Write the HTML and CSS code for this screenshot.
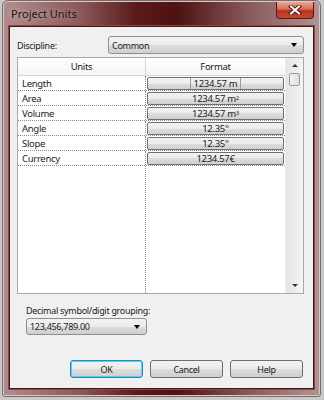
FILE: index.html
```html
<!DOCTYPE html>
<html lang="en">
<head>
<meta charset="UTF-8">
<meta name="viewport" content="width=device-width, initial-scale=1.0">
<title>Project Units</title>
<link rel="stylesheet" href="styles.css">
</head>
<body>
<div class="window">
  <div class="titlebar">
    <span class="title">Project Units</span>
    <div class="close">
      <svg width="14" height="10" viewBox="0 0 14 10">
        <path d="M3 1.5 L11 8.5 M11 1.5 L3 8.5" stroke="#4a1a14" stroke-width="4" stroke-linecap="square"/>
        <path d="M3 1.5 L11 8.5 M11 1.5 L3 8.5" stroke="#fff" stroke-width="2" stroke-linecap="square"/>
      </svg>
    </div>
  </div>
  <div class="client">
    <div class="discipline">
      <span class="label">Discipline:</span>
      <div class="combo wide">
        <span>Common</span>
        <span class="arrow"></span>
      </div>
    </div>

    <div class="grid">
      <div class="grid-main">
        <div class="head">
          <div class="col-units">Units</div>
          <div class="col-format">Format</div>
        </div>
        <div class="rows">
          <div class="row">
            <div class="col-units cell">Length</div>
            <div class="col-format cell"><div class="fmt"><span class="focus">1234.57 m</span></div></div>
          </div>
          <div class="row">
            <div class="col-units cell">Area</div>
            <div class="col-format cell"><div class="fmt">1234.57 m<sup>2</sup></div></div>
          </div>
          <div class="row">
            <div class="col-units cell">Volume</div>
            <div class="col-format cell"><div class="fmt">1234.57 m<sup>3</sup></div></div>
          </div>
          <div class="row">
            <div class="col-units cell">Angle</div>
            <div class="col-format cell"><div class="fmt">12.35&deg;</div></div>
          </div>
          <div class="row">
            <div class="col-units cell">Slope</div>
            <div class="col-format cell"><div class="fmt">12.35&deg;</div></div>
          </div>
          <div class="row">
            <div class="col-units cell">Currency</div>
            <div class="col-format cell"><div class="fmt">1234.57&euro;</div></div>
          </div>
          <div class="row filler">
            <div class="col-units"></div>
            <div class="col-format"></div>
          </div>
        </div>
      </div>
      <div class="scrollbar">
        <span class="up"></span>
        <span class="thumb"></span>
        <span class="gap"></span>
        <span class="down"></span>
      </div>
    </div>

    <div class="grouping-label">Decimal symbol/digit grouping:</div>
    <div class="combo narrow">
      <span>123,456,789.00</span>
      <span class="arrow"></span>
    </div>

    <div class="buttons">
      <button class="btn default">OK</button>
      <button class="btn">Cancel</button>
      <button class="btn">Help</button>
    </div>
  </div>
</div>
</body>
</html>
```

FILE: styles.css
```css
body {
  margin: 0;
  background: #c9c9c9;
  font-family: "Noto Sans", sans-serif;
  font-size: 9px;
  letter-spacing: -0.3px;
  color: #1b1b1b;
}
.window {
  margin: 0 0 0 2px;
  width: 319px;
  height: 397px;
  box-sizing: border-box;
  padding: 0 6px 7px 6px;
  border: 1px solid #7a6a6a;
  border-radius: 6px 6px 3px 3px;
  background: linear-gradient(to right, #b08e8e 0%, #8a5656 25%, #5a1a1a 42%, #4e1212 55%, #8a5a5a 78%, #b09494 100%);
  box-shadow: inset 0 0 0 1px #d8c8c8;
  display: flex;
  flex-direction: column;
}
.titlebar {
  height: 25px;
  display: flex;
  align-items: flex-start;
  justify-content: space-between;
  flex-shrink: 0;
}
.title {
  margin: 5px 0 0 2px;
  color: #1e1414;
  font-size: 11px;
  letter-spacing: 0;
  text-shadow: 0 0 6px rgba(255,255,255,0.6);
}
.close {
  width: 38px;
  height: 17px;
  margin: 1px 0 0 0;
  box-sizing: border-box;
  border: 1px solid #5a1810;
  border-top: none;
  border-radius: 0 0 4px 4px;
  background: linear-gradient(#e8a898 0%, #d86a52 45%, #b8301c 55%, #c84a30 100%);
  display: flex;
  align-items: center;
  justify-content: center;
}
.client {
  flex: 1;
  background: #f0f0f0;
  border: 1px solid #4a1414;
  box-shadow: 0 0 0 1px #8a4a4a;
  padding: 9px 9px 0 7px;
  display: flex;
  flex-direction: column;
}
.discipline {
  display: flex;
  align-items: center;
  height: 18px;
}
.label {
  width: 91px;
}
.combo {
  height: 18px;
  box-sizing: border-box;
  border: 1px solid #8e8f8f;
  border-radius: 3px;
  background: linear-gradient(#f2f2f2, #ebebeb 50%, #dddddd 50%, #cfcfcf);
  display: flex;
  align-items: center;
  justify-content: space-between;
  padding: 0 6px 0 3px;
}
.combo.wide {
  flex: 1;
}
.combo.narrow {
  width: 121px;
  height: 17px;
  margin: 1px 0 0 9px;
}
.arrow {
  width: 0;
  height: 0;
  border-left: 3.5px solid transparent;
  border-right: 3.5px solid transparent;
  border-top: 4px solid #000;
}
.grid {
  margin-top: 3px;
  height: 237px;
  box-sizing: border-box;
  border: 1px solid #a9a9a9;
  background: #fff;
  display: flex;
  font-size: 9.5px;
}
.grid-main {
  flex: 1;
  display: flex;
  flex-direction: column;
}
.head {
  display: flex;
  height: 18px;
  box-sizing: border-box;
  border-bottom: 1px solid #d5d5d5;
  background: linear-gradient(#ffffff, #f5f5f6);
}
.head > div {
  display: flex;
  align-items: center;
  justify-content: center;
}
.col-units {
  width: 128px;
  box-sizing: border-box;
  border-right: 1px solid #d5d5d5;
}
.col-format {
  flex: 1;
}
.rows {
  flex: 1;
  display: flex;
  flex-direction: column;
}
.row {
  display: flex;
  height: 15px;
  box-sizing: border-box;
  border-bottom: 1px dotted #8c8c8c;
}
.row .col-units {
  border-right: 1px dotted #8c8c8c;
}
.row.filler {
  flex: 1;
  border-bottom: none;
}
.cell {
  display: flex;
  align-items: center;
}
.col-units.cell {
  padding-left: 4px;
}
.col-format.cell {
  padding: 0 1px 0 1px;
}
.fmt {
  flex: 1;
  height: 13px;
  box-sizing: border-box;
  border: 1px solid #707070;
  border-radius: 2px;
  background: linear-gradient(#f2f2f2, #ebebeb 50%, #dddddd 50%, #cfcfcf);
  display: flex;
  align-items: center;
  justify-content: center;
  line-height: 11px;
}
.fmt sup {
  font-size: 6px;
  line-height: 0;
  vertical-align: 4px;
}
.focus {
  padding: 0 3px;
  border-left: 1px solid #9a9a9a;
  border-right: 1px solid #9a9a9a;
}
.scrollbar {
  width: 17px;
  background: linear-gradient(to right, #e4e4e4, #f4f4f4);
  border-left: 1px solid #ececec;
  display: flex;
  flex-direction: column;
  align-items: center;
}
.up, .down {
  width: 0;
  height: 0;
  border-left: 3px solid transparent;
  border-right: 3px solid transparent;
  margin: 6px 0 6px 0;
}
.up {
  border-bottom: 3px solid #333;
}
.down {
  border-top: 3px solid #333;
  margin: 4px 0 6px 0;
}
.thumb {
  width: 11px;
  height: 13px;
  box-sizing: border-box;
  border: 1px solid #9a9a9a;
  border-radius: 2px;
  background: linear-gradient(to right, #f4f4f4, #dcdcdc);
}
.gap {
  flex: 1;
}
.grouping-label {
  margin: 9px 0 0 9px;
  height: 14px;
  display: flex;
  align-items: center;
}
.buttons {
  margin-top: 25px;
  display: flex;
  justify-content: flex-end;
  gap: 7px;
  padding-right: 1px;
}
.btn {
  width: 73px;
  height: 18px;
  font: inherit;
  letter-spacing: inherit;
  color: #1b1b1b;
  border: 1px solid #707070;
  border-radius: 3px;
  background: linear-gradient(#f2f2f2, #ebebeb 50%, #dddddd 50%, #cfcfcf);
  padding: 0;
}
.btn.default {
  border-color: #3c7fb1;
  box-shadow: inset 0 0 0 1px #48d6fb;
}
```
